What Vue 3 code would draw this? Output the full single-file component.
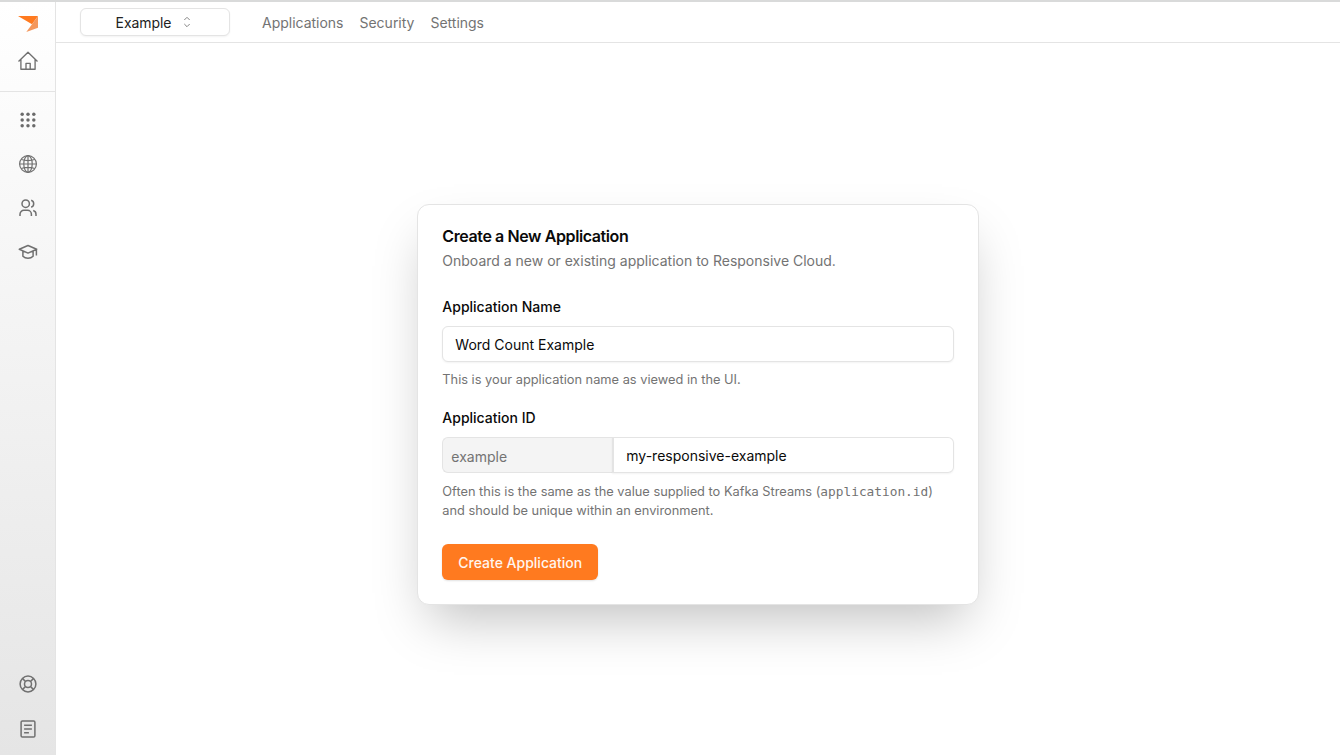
<script setup>
import { ref } from 'vue'

const name = ref('Word Count Example')
const appId = ref('my-responsive-example')
const links = ['Applications', 'Security', 'Settings']
const dots = [4.6, 11, 17.4]
</script>

<template>
  <div class="app">
    <aside class="sidebar">
      <div class="side-head">
        <svg class="logo" viewBox="0 0 20 16" width="20" height="16">
          <path d="M0 0H20L14 8.2Z" fill="#ff7a1f" />
          <path d="M20 0V11.8L8.3 16L14 8.2Z" fill="#f4975c" />
        </svg>
        <svg class="icon home" viewBox="0 0 20 20">
          <path d="M.5 10.6 10 1.3l9.5 9.3M2.9 8.6V18.2h14.2V8.6M8 18.2v-5.9h4.2v5.9" />
        </svg>
      </div>
      <nav class="side-nav">
        <svg class="icon solid" viewBox="0 0 22 22">
          <template v-for="y in dots" :key="y">
            <circle v-for="x in dots" :key="x" :cx="x" :cy="y" r="1.9" />
          </template>
        </svg>
        <svg class="icon thin" viewBox="0 0 20 20">
          <circle cx="10" cy="10" r="8.4" />
          <ellipse cx="10" cy="10" rx="4.2" ry="8.4" />
          <path d="M10 1.6v16.8M1.6 10h16.8M3.3 5.5q6.7 2.1 13.4 0M3.3 14.5q6.7-2.1 13.4 0" />
        </svg>
        <svg class="icon" viewBox="0 0 20 20">
          <circle cx="7.7" cy="5.7" r="3.7" />
          <path d="M2 18v-1.8a3.9 3.9 0 0 1 3.9-3.9h3.6a3.9 3.9 0 0 1 3.9 3.9V18M13.2 2.2a3.7 3.7 0 0 1 0 7M15.2 12.5a3.9 3.9 0 0 1 2.8 3.7V18" />
        </svg>
        <svg class="icon" viewBox="0 0 20 20">
          <path d="M1.3 7.3 10 3.5l8.7 3.8L10 11.1ZM4.9 9v5.3c2.6 2.6 7.6 2.6 10.2 0V9M18.4 7.3v6.2" />
        </svg>
      </nav>
      <div class="side-foot">
        <svg class="icon" viewBox="0 0 20 20">
          <circle cx="10" cy="10" r="7.9" />
          <circle cx="10" cy="10" r="3.5" />
          <path d="m4.4 4.4 3.1 3.1M15.6 4.4l-3.1 3.1M4.4 15.6l3.1-3.1M15.6 15.6l-3.1-3.1" />
        </svg>
        <svg class="icon" viewBox="0 0 20 20">
          <rect x="3.1" y="1.9" width="13.8" height="16.2" rx="1.3" />
          <path d="M6.1 6.2h7.8M6.1 10h7.8M6.1 13.8h4.8" />
        </svg>
      </div>
    </aside>

    <div class="main">
      <header class="topbar">
        <button class="picker">
          <span>Example</span>
          <svg viewBox="0 0 8 12" width="8" height="12">
            <path d="M1.3 4 4 1.3 6.7 4M1.3 8 4 10.7 6.7 8" />
          </svg>
        </button>
        <nav class="links">
          <a v-for="link in links" :key="link">{{ link }}</a>
        </nav>
      </header>

      <main class="content">
        <form class="card" @submit.prevent>
          <h1>Create a New Application</h1>
          <p class="lead">Onboard a new or existing application to Responsive Cloud.</p>

          <label for="name">Application Name</label>
          <input id="name" v-model="name" class="field" />
          <p class="hint">This is your application name as viewed in the UI.</p>

          <label for="appid">Application ID</label>
          <div class="group">
            <div class="prefix">example</div>
            <input id="appid" v-model="appId" class="field" />
          </div>
          <p class="hint">Often this is the same as the value supplied to Kafka Streams (<code>application.id</code>) and should be unique within an environment.</p>

          <button class="submit">Create Application</button>
        </form>
      </main>
    </div>
  </div>
</template>

<style>
body {
  margin: 0;
  overflow: hidden;
}
</style>

<style scoped>
* {
  box-sizing: border-box;
}
.app {
  display: flex;
  height: 755px;
  border-top: 2px solid #d9dada;
  background: #fff;
  font-family: Inter, "Liberation Sans", sans-serif;
  font-size: 14px;
  color: #0a0a0a;
}
.sidebar {
  display: flex;
  flex-direction: column;
  width: 56px;
  border-right: 1px solid #e4e4e4;
  background: linear-gradient(#fff, #e5e5e5);
}
.side-head {
  display: flex;
  flex-direction: column;
  align-items: center;
  height: 90px;
  padding-top: 14px;
  border-bottom: 1px solid #e4e4e4;
}
.logo {
  margin-left: 1px;
}
.icon {
  display: block;
  width: 20px;
  height: 20px;
  fill: none;
  stroke: #707070;
  stroke-width: 1.5;
  stroke-linejoin: round;
}
.home {
  margin-top: 19px;
  stroke-width: 1.35;
}
.solid {
  fill: #6b6b6b;
  stroke: none;
}
.thin {
  stroke-width: 1.2;
}
.side-nav,
.side-foot {
  display: flex;
  flex-direction: column;
  align-items: center;
  gap: 24.2px;
}
.side-nav {
  padding-top: 17.6px;
}
.side-foot {
  margin-top: auto;
  padding-bottom: 16.4px;
}
.main {
  display: flex;
  flex: 1;
  flex-direction: column;
}
.topbar {
  display: flex;
  align-items: center;
  gap: 32px;
  height: 41px;
  padding: 0 24px;
  border-bottom: 1px solid #e4e4e4;
}
.picker {
  display: flex;
  align-items: center;
  justify-content: center;
  gap: 12px;
  width: 150px;
  height: 28px;
  padding: 0 3px 0 0;
  border: 1px solid #e4e4e4;
  border-radius: 6px;
  background: #fff;
  box-shadow: 0 1px 2px rgba(0, 0, 0, 0.05);
  font: inherit;
  letter-spacing: -0.05px;
  color: #222;
}
.picker svg {
  fill: none;
  stroke: #858585;
  stroke-width: 1;
}
.links {
  display: flex;
  gap: 16px;
  letter-spacing: -0.01px;
  color: #737373;
}
.content {
  display: flex;
  flex: 1;
  align-items: flex-start;
  justify-content: center;
  padding: 160.5px 0 0 0.6px;
}
.card {
  width: 562px;
  height: 401px;
  padding: 21.5px 24px;
  border: 1px solid #e4e4e4;
  border-radius: 12px;
  background: #fff;
  box-shadow: 0 25px 50px -12px rgba(0, 0, 0, 0.25);
}
h1 {
  margin: 0;
  font-size: 16px;
  font-weight: 600;
  line-height: 20px;
  letter-spacing: -0.4px;
}
.lead {
  margin: 5px 0 27px;
  line-height: 20px;
  color: #737373;
}
label {
  display: block;
  margin-bottom: 10px;
  font-weight: 500;
  line-height: 18px;
}
.field {
  display: block;
  width: 100%;
  height: 36px;
  padding: 1px 12px 0;
  border: 1px solid #e4e4e4;
  border-radius: 6px;
  outline: none;
  background: #fff;
  box-shadow: 0 1px 2px rgba(0, 0, 0, 0.05);
  font: inherit;
  color: #0a0a0a;
}
.hint {
  margin: 8px 0 19.5px;
  font-size: 12.82px;
  line-height: 19.5px;
  color: #737373;
}
.group {
  display: flex;
}
.prefix {
  flex: 0 0 170px;
  height: 36px;
  padding-left: 8px;
  border: 1px solid #e4e4e4;
  border-right: 0;
  border-radius: 6px 0 0 6px;
  background: #f4f4f4;
  line-height: 37px;
  color: #737373;
}
.group .field {
  flex: 1;
  border-left-width: 2px;
  border-radius: 0 6px 6px 0;
}
.group + .hint {
  margin: 8.5px 0 23.5px;
}
code {
  font-family: "DejaVu Sans Mono", "Liberation Mono", monospace;
  font-size: 12.8px;
  line-height: 1;
}
.submit {
  display: block;
  height: 36px;
  padding: 0 16px;
  border: 0;
  border-radius: 6px;
  background: #ff7a1f;
  box-shadow: 0 1px 2px rgba(0, 0, 0, 0.12);
  font: inherit;
  font-weight: 500;
  color: #fff5ee;
}
</style>
